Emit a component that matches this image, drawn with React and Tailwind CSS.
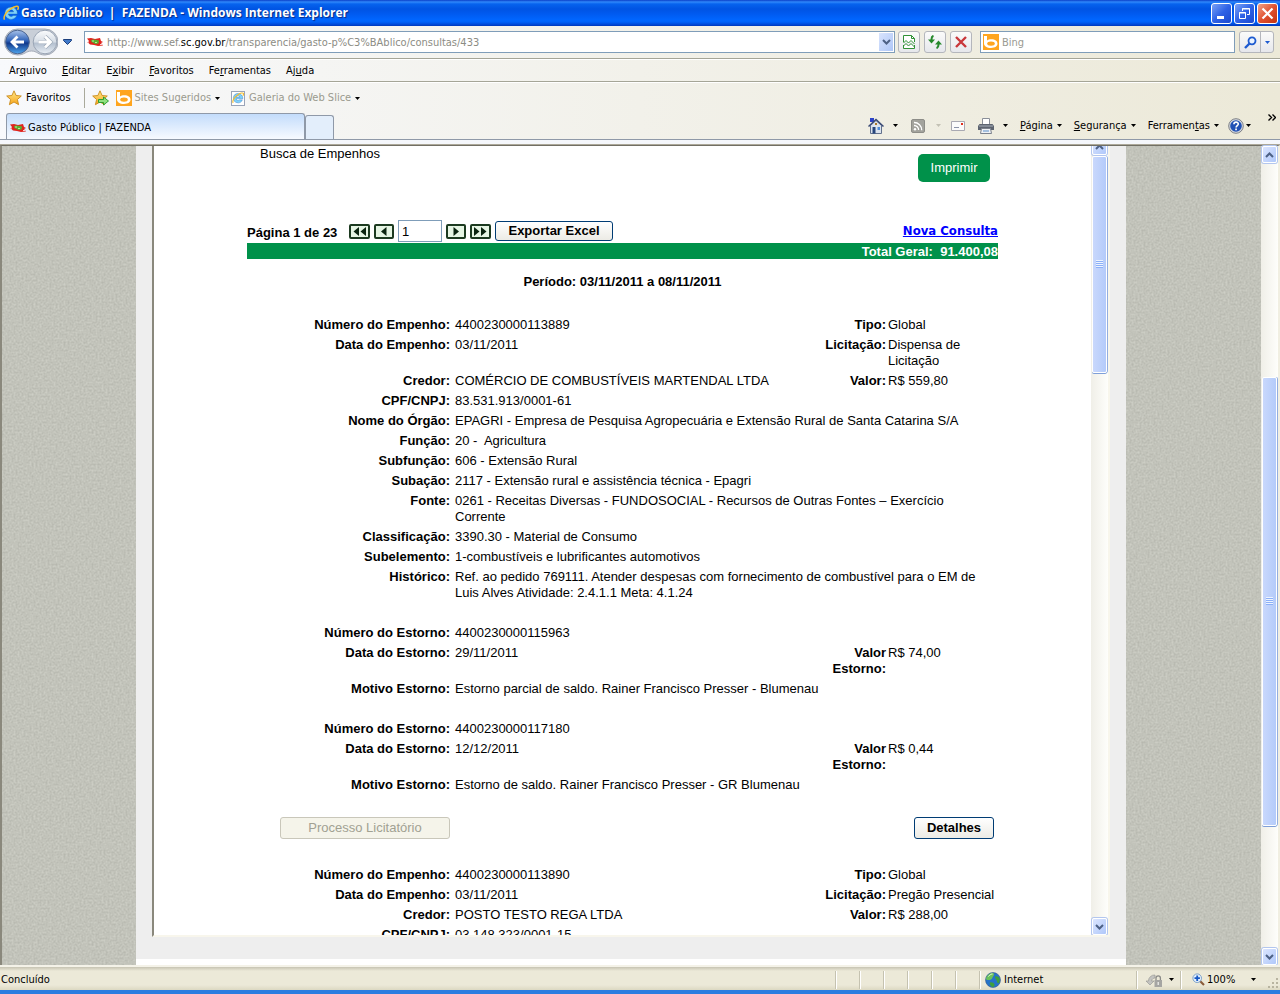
import React, { useState } from "react";

const estornoGap = { gap: true };

const empenhos = [
  {
    id: "4400230000113889",
    actions: true,
    rows: [
      { label: "Número do Empenho:", value: "4400230000113889", label2: "Tipo:", value2: "Global" },
      { label: "Data do Empenho:", value: "03/11/2011", label2: "Licitação:", value2: "Dispensa de Licitação" },
      { label: "Credor:", value: "COMÉRCIO DE COMBUSTÍVEIS MARTENDAL LTDA", label2: "Valor:", value2: "R$ 559,80" },
      { label: "CPF/CNPJ:", value: "83.531.913/0001-61" },
      { label: "Nome do Órgão:", value: "EPAGRI - Empresa de Pesquisa Agropecuária e Extensão Rural de Santa Catarina S/A" },
      { label: "Função:", value: "20 -\u00a0 Agricultura" },
      { label: "Subfunção:", value: "606 - Extensão Rural" },
      { label: "Subação:", value: "2117 - Extensão rural e assistência técnica - Epagri" },
      { label: "Fonte:", value: "0261 - Receitas Diversas - FUNDOSOCIAL - Recursos de Outras Fontes – Exercício Corrente" },
      { label: "Classificação:", value: "3390.30 - Material de Consumo" },
      { label: "Subelemento:", value: "1-combustíveis e lubrificantes automotivos" },
      { label: "Histórico:", value: "Ref. ao pedido 769111. Atender despesas com fornecimento de combustível para o EM de Luis Alves Atividade: 2.4.1.1 Meta: 4.1.24" },
      estornoGap,
      { label: "Número do Estorno:", value: "4400230000115963" },
      { label: "Data do Estorno:", value: "29/11/2011", label2: "Valor Estorno:", value2: "R$ 74,00" },
      { label: "Motivo Estorno:", value: "Estorno parcial de saldo. Rainer Francisco Presser - Blumenau" },
      estornoGap,
      { label: "Número do Estorno:", value: "4400230000117180" },
      { label: "Data do Estorno:", value: "12/12/2011", label2: "Valor Estorno:", value2: "R$ 0,44" },
      { label: "Motivo Estorno:", value: "Estorno de saldo. Rainer Francisco Presser - GR Blumenau" },
    ],
  },
  {
    id: "4400230000113890",
    rows: [
      { label: "Número do Empenho:", value: "4400230000113890", label2: "Tipo:", value2: "Global" },
      { label: "Data do Empenho:", value: "03/11/2011", label2: "Licitação:", value2: "Pregão Presencial" },
      { label: "Credor:", value: "POSTO TESTO REGA LTDA", label2: "Valor:", value2: "R$ 288,00" },
      { label: "CPF/CNPJ:", value: "03.148.323/0001-15" },
    ],
  },
];

/* ---------- icons ---------- */

function Caret({ className = "text-black" }) {
  return (
    <svg width="5" height="3" viewBox="0 0 5 3" className={`shrink-0 ${className}`} aria-hidden="true">
      <path d="M0 0h5L2.500 3z" fill="currentColor" />
    </svg>
  );
}

function IeLogo({ size = 16 }) {
  return (
    <svg width={size} height={size} viewBox="0 0 16 16" className="shrink-0" aria-hidden="true">
      <path
        d="M8 2a6.200 6.200 0 1 0 5.800 8.500h-3.700a2.700 2.700 0 0 1-4.700-1.400h9A6.300 6.300 0 0 0 8 2zM5.400 6.800a2.700 2.700 0 0 1 5.200 0z"
        fill="#7fd2fa"
        stroke="#1b66b8"
        strokeWidth=".5"
      />
      <path d="M1.600 14.600C-.3 12 3.500 6.500 8 3.600c3.300-2.200 6.800-3.100 7.300-1.500.2.700-.1 1.700-.7 2.800" fill="none" stroke="#f4bd2c" strokeWidth="1.500" />
    </svg>
  );
}

function FlagIcon() {
  return (
    <svg width="16" height="10" viewBox="0 0 16 10" className="shrink-0" aria-hidden="true">
      <path d="M0 1.500 4 1l4 1 5-1 1 3 2 1-2 1 2 2.500-5 .5-4-1-4-.5-1.500-1.500L0 5.500 2 4z" fill="#e0241d" />
      <path d="M0 5h2M13 7.500h2" stroke="#fff" strokeWidth=".8" />
      <path d="m4 3 3-.5 5 1-.5 3-3 .5-4-2z" fill="#55b22f" />
      <path d="M5 4h2M8 5.500h2" stroke="#c2e39a" />
    </svg>
  );
}

function BingIcon() {
  return (
    <svg width="16" height="16" viewBox="0 0 16 16" className="shrink-0" aria-hidden="true">
      <path d="M0 0h16v16H0z" fill="#ffa51e" />
      <path d="M1 2h3v4.500c1-.7 2.500-1.200 4.300-1.200 3.900 0 6.200 1.800 6.200 4.300s-2.300 4.400-6.500 4.400-7-1.800-7-4.500z" fill="#fff" />
      <ellipse cx="8" cy="9.600" rx="3.800" ry="2.200" fill="#ffa51e" />
    </svg>
  );
}

function Star({ arrow }) {
  return (
    <svg width="17" height="16" viewBox="0 0 17 16" className="shrink-0" aria-hidden="true">
      <defs>
        <linearGradient id="starFill" x1="0" y1="0" x2="0" y2="1">
          <stop offset="0" stopColor="#ffe88a" />
          <stop offset="1" stopColor="#f7a51b" />
        </linearGradient>
      </defs>
      <path
        d="m8 .8 2.100 4.700 5.200.5-3.900 3.500 1.200 5.200L8 12l-4.600 2.700 1.200-5.200L.7 6l5.200-.5z"
        fill="url(#starFill)"
        stroke="#c98a1c"
        strokeWidth=".9"
        strokeLinejoin="round"
      />
      {arrow && <path d="M6.500 9.500h5V7l5 4-5 4v-2.500h-5z" fill="#8fe07f" stroke="#219a2a" strokeWidth=".9" />}
    </svg>
  );
}

function NavArrows() {
  return (
    <svg width="54" height="28" viewBox="0 0 54 28" aria-hidden="true">
      <defs>
        <linearGradient id="navBack" x1="0" y1="0" x2="0" y2="1">
          <stop offset="0" stopColor="#a9c3ea" />
          <stop offset=".45" stopColor="#2f62b8" />
          <stop offset=".55" stopColor="#11398c" />
          <stop offset="1" stopColor="#4fa6ee" />
        </linearGradient>
        <linearGradient id="navNext" x1="0" y1="0" x2="0" y2="1">
          <stop offset="0" stopColor="#fbfcfd" />
          <stop offset=".5" stopColor="#d5dce5" />
          <stop offset=".55" stopColor="#b3bfcf" />
          <stop offset="1" stopColor="#eaf0f6" />
        </linearGradient>
      </defs>
      <path d="M13.500 1h27.500a13 13 0 0 1 0 26c-7 0-8-4-13.500-4s-7 4-14 4a13 13 0 0 1 0-26z" fill="#c9cfd8" stroke="#a5acb8" />
      <circle cx="13.500" cy="14" r="11.800" fill="url(#navBack)" stroke="#4a638f" />
      <path d="M20 14H9M13.500 8.500 8 14l5.500 5.500" fill="none" stroke="#fff" strokeWidth="2.800" />
      <circle cx="41" cy="14" r="11.800" fill="url(#navNext)" stroke="#9aa5b5" />
      <path d="M34.500 14h11M41 8.500l5.500 5.500-5.500 5.500" fill="none" stroke="#9ba7b6" strokeWidth="4" />
      <path d="M34.500 14h11M41 8.500l5.500 5.500-5.500 5.500" fill="none" stroke="#fff" strokeWidth="2.800" />
    </svg>
  );
}

function HomeIcon() {
  return (
    <svg width="16" height="16" viewBox="0 0 16 16" aria-hidden="true">
      <path d="M2 0h4v4H2z" fill="#2c43c8" />
      <path d="M2.500 7.500 8 2.500l5.500 5v8h-11z" fill="#dbe3ee" stroke="#62718d" />
      <path d="M.5 8.500 8 1.500l7.500 7" fill="none" stroke="#3a4a75" strokeWidth="1.500" />
      <path d="M4.500 9h3v6.500h-3z" fill="#27467c" />
      <path d="M9.500 9H12v3H9.500z" fill="#4f8bd8" />
      <path d="M7 5h2v2H7z" fill="#a9772a" />
    </svg>
  );
}

function RssIcon() {
  return (
    <svg width="14" height="14" viewBox="0 0 14 14" aria-hidden="true">
      <rect x=".5" y=".5" width="13" height="13" rx="1.500" fill="#a3a39d" stroke="#8d8d88" />
      <circle cx="4" cy="10.300" r="1.200" fill="#fff" />
      <path d="M3 6.500a4.500 4.500 0 0 1 4.600 4.600M3 3.500a7.500 7.500 0 0 1 7.700 7.700" fill="none" stroke="#fff" strokeWidth="1.300" />
    </svg>
  );
}

function MailIcon() {
  return (
    <svg width="14" height="10" viewBox="0 0 14 10" aria-hidden="true">
      <path d="M.5.5h13v9H.5z" fill="#fbfbfb" stroke="#a9a9b2" />
      <path d="M10 2h2v2h-2z" fill="#e0301e" />
      <path d="M3 6.500h5" stroke="#8b93a8" />
    </svg>
  );
}

function PrinterIcon() {
  return (
    <svg width="16" height="16" viewBox="0 0 16 16" aria-hidden="true">
      <path d="M4.500.5h7v6h-7z" fill="#fff" stroke="#8a8f98" />
      <path d="M1.500 6h13l1.500 2v4H0V8z" fill="#5d6470" />
      <path d="M1 8h14" stroke="#a9b0ba" />
      <path d="M3.500 10.500h9l1 5h-11z" fill="#eef1f5" stroke="#7b818c" />
      <path d="M5 13h6" stroke="#5b8fc9" />
    </svg>
  );
}

function HelpIcon() {
  return (
    <svg width="16" height="16" viewBox="0 0 16 16" aria-hidden="true">
      <circle cx="8" cy="8" r="7.300" fill="#d7dbe2" stroke="#70747c" strokeWidth=".9" />
      <circle cx="8" cy="8" r="5.800" fill="#2151b5" />
      <path d="M5.900 6.200c0-2.900 4.400-2.700 4.400-.2 0 1.500-2.200 1.600-2.200 3.400" fill="none" stroke="#fff" strokeWidth="1.600" />
      <path d="M7.200 10.600h1.700v1.700H7.200z" fill="#fff" />
    </svg>
  );
}

function GlobeIcon() {
  return (
    <svg width="16" height="16" viewBox="0 0 16 16" aria-hidden="true">
      <circle cx="8" cy="8" r="7.500" fill="#2673c9" stroke="#3a5b86" strokeWidth=".6" />
      <path d="M3 3c2-2.300 5-2.500 6-1.500S8 4 7.500 5.500 6 8 4.500 8 1 8 1 7s.8-2.800 2-4z" fill="#6cc25a" />
      <path d="M10 4.500c1.500-.8 3.500 0 4.500 1.500.5 2 .3 3.500-.5 5-1.300.6-2-.5-2.200-2S9.300 5.300 10 4.500zM5 10.500c1.500-.5 4 .3 4.500 1.800S8.600 15 7.500 15 4 12 5 10.500z" fill="#3fa03c" />
      <path d="M3.500 4.500c1-1.700 3-2.500 4-2.500" stroke="#e9fbe2" fill="none" />
    </svg>
  );
}

function Chevron({ up }) {
  return (
    <svg width="9" height="6" viewBox="0 0 9 6" aria-hidden="true">
      <path d={up ? "M1 5l3.500-3.500L8 5" : "M1 1l3.500 3.500L8 1"} fill="none" stroke="#4d6185" strokeWidth="2" />
    </svg>
  );
}

/* ---------- browser chrome ---------- */

function TitleBar() {
  const btn = "flex h-[21px] w-[21px] items-center justify-center rounded-[3px] border border-white";
  const blue = "bg-linear-to-br from-[#7ba0f5] via-[#2f62e6] to-[#1b49cf]";
  return (
    <header className="flex h-[26px] shrink-0 items-center justify-between bg-[linear-gradient(to_bottom,#0a3fc8_0px,#2f88fb_2px,#0663ee_4px,#0054e3_9px,#0059ee_13px,#0066ff_20px,#0062f8_22px,#0043d0_25px,#0038b8_26px)] pr-[2px] pl-[3px]">
      <div className="flex items-center gap-[2px]">
        <IeLogo />
        <h1 className="font-['Open_Sans',sans-serif] text-[12px] leading-4 font-bold whitespace-pre text-white [text-shadow:1px_1px_1px_#0b2b84]">
          Gasto Público  |  FAZENDA - Windows Internet Explorer
        </h1>
      </div>
      <div className="flex gap-[2px]">
        <button type="button" aria-label="Minimizar" className={`${btn} ${blue}`}>
          <svg width="13" height="13" viewBox="0 0 13 13">
            <path d="M2 9h7v3H2z" fill="#fff" />
          </svg>
        </button>
        <button type="button" aria-label="Restaurar" className={`${btn} ${blue}`}>
          <svg width="13" height="13" viewBox="0 0 13 13">
            <path d="M4.500 4V1.500h7v6H9M4 2h8" fill="none" stroke="#fff" />
            <path d="M1.500 5.500h6v6h-6zM1 6h7" fill="none" stroke="#fff" />
          </svg>
        </button>
        <button type="button" aria-label="Fechar" className={`${btn} bg-linear-to-br from-[#f0a085] via-[#e0512f] to-[#c3330f]`}>
          <svg width="13" height="13" viewBox="0 0 13 13">
            <path d="m1.500 1.500 10 10m0-10-10 10" stroke="#fff" strokeWidth="2.200" />
          </svg>
        </button>
      </div>
    </header>
  );
}

function AddressBar() {
  const tool =
    "flex h-[22px] w-[22px] items-center justify-center rounded-[3px] border border-[#b4b6bc] bg-linear-to-b from-[#fbfbfa] to-[#e6e7ec]";
  return (
    <div className="flex h-8 shrink-0 items-center pr-[6px] pl-1">
      <button type="button" aria-label="Voltar e avançar">
        <NavArrows />
      </button>
      <button type="button" aria-label="Páginas recentes" className="mx-[5px] w-[16px]">
        <svg width="9" height="6" viewBox="0 0 9 6">
          <path d="M.5.5h8v1l-4 4-4-4z" fill="#3f78c9" stroke="#1c3f7c" />
        </svg>
      </button>
      <div className="flex h-[22px] flex-1 items-center border border-[#7f9db9] bg-white pr-px pl-[2px]">
        <FlagIcon />
        <div className="ml-1 flex-1 pt-[2px] text-[#8c8c84]">
          http://www.sef.<span className="text-black">sc.gov.br</span>/transparencia/gasto-p%C3%BAblico/consultas/433
        </div>
        <button
          type="button"
          aria-label="Abrir lista de endereços"
          className="flex h-[18px] w-[14px] items-center justify-center bg-linear-to-br from-[#d9e4fd] to-[#aec6f7]"
        >
          <Chevron />
        </button>
      </div>
      <div className="ml-[3px] flex gap-1">
        <button type="button" aria-label="Modo de compatibilidade" className={tool}>
          <svg width="12" height="14" viewBox="0 0 12 14">
            <path d="M.5 7V.5h8l3 3V7M.5 10v3.500h11V10" fill="#fff" stroke="#2f9136" />
            <path d="m.5 8 2.500-2.500L5.500 8 8 5.500 11.500 9M.5 11 3 8.500 5.500 11 8 8.500l3.500 3.500M8.500.5v3h3" fill="none" stroke="#2f9136" />
          </svg>
        </button>
        <button type="button" aria-label="Atualizar" className={tool}>
          <svg width="14" height="14" viewBox="0 0 14 14">
            <path d="M5.500.8Q3.300 1.500 3.500 5M8.500 13.200q2.200-.7 2-4.200" fill="none" stroke="#26892c" strokeWidth="2" />
            <path d="M0 4.500h7L3.500 8.500zM7 9.500h7L10.500 5.500z" fill="#26892c" />
          </svg>
        </button>
        <button type="button" aria-label="Parar" className={tool}>
          <svg width="12" height="12" viewBox="0 0 12 12">
            <path d="m1 1 10 10M11 1 1 11" stroke="#c9373b" strokeWidth="2.400" />
          </svg>
        </button>
      </div>
      <label className="ml-2 flex h-[22px] w-[255px] items-center gap-[3px] border border-[#7f9db9] bg-white pl-[2px]">
        <BingIcon />
        <input type="text" placeholder="Bing" aria-label="Pesquisar" className="min-w-0 flex-1 pt-[2px] outline-none placeholder:text-[#9a9a92]" />
      </label>
      <div className="ml-1 flex h-[22px] rounded-[3px] border border-[#b4b6bc] bg-linear-to-b from-[#fbfbfa] to-[#e6e7ec]">
        <button type="button" aria-label="Pesquisar" className="flex w-[21px] items-center justify-center border-r border-[#b4b6bc]">
          <svg width="13" height="13" viewBox="0 0 13 13">
            <circle cx="8" cy="4.800" r="3.500" fill="#eaf3ff" stroke="#1e5bd0" strokeWidth="1.800" />
            <path d="m5.500 7.500-4.500 4.500" stroke="#1e5bd0" strokeWidth="2.400" />
          </svg>
        </button>
        <button type="button" aria-label="Opções de pesquisa" className="flex w-3 items-center justify-center">
          <Caret className="text-[#1e5bd0]" />
        </button>
      </div>
    </div>
  );
}

// text before the access key, the key itself, text after it
const menus = [
  ["Ar", "q", "uivo"],
  ["", "E", "ditar"],
  ["E", "x", "ibir"],
  ["", "F", "avoritos"],
  ["Fe", "r", "ramentas"],
  ["Aj", "u", "da"],
];

function KeyLabel({ parts }) {
  return (
    <span>
      {parts[0]}
      <u>{parts[1]}</u>
      {parts[2]}
    </span>
  );
}

function MenuBar() {
  return (
    <nav className="flex h-6 shrink-0 items-center gap-[15px] border-t border-b border-[#a5a597] pt-[2px] pl-[9px] shadow-[inset_0_1px_0_#fff]">
      {menus.map((m) => (
        <button type="button" key={m.join("")}>
          <KeyLabel parts={m} />
        </button>
      ))}
    </nav>
  );
}

function FavoritesBar() {
  return (
    <div className="flex h-[31px] shrink-0 items-center border-t border-white pl-[6px]">
      <button type="button" className="flex items-center gap-[3px]">
        <Star /> Favoritos
      </button>
      <div className="ml-[13px] h-5 border-l border-[#a9a99b]" />
      <button type="button" aria-label="Adicionar a favoritos" className="mx-[7px]">
        <Star arrow />
      </button>
      <button type="button" className="flex items-center gap-[3px] text-[#9a9a8e]">
        <BingIcon /> Sites Sugeridos <Caret className="ml-px text-black" />
      </button>
      <button type="button" className="ml-[11px] flex items-center gap-1 text-[#9a9a8e]">
        <span className="flex h-[15px] w-[14px] items-center justify-center border border-[#9aa4b8] bg-white">
          <IeLogo size={12} />
        </span>
        Galeria do Web Slice <Caret className="text-black" />
      </button>
    </div>
  );
}

function TabBar() {
  return (
    <div className="flex h-[27px] shrink-0 items-end border-b border-[#8f99a8] pl-[6px]">
      <div className="flex h-[26px] w-[299px] items-center gap-[2px] rounded-t-[3px] border border-b-0 border-[#8f99a8] bg-linear-to-b from-[#c3dcfb] to-[#f7faff] pt-[2px] pl-[3px]">
        <FlagIcon />
        Gasto Público | FAZENDA
      </div>
      <button
        type="button"
        aria-label="Nova guia"
        className="h-[24px] w-[29px] rounded-t-[3px] border border-b-0 border-[#8f99a8] bg-[#e3eefb]"
      />
      <div className="ml-auto flex h-[27px] items-center pr-1">
        <button type="button" aria-label="Página inicial" className="flex items-center gap-[9px]">
          <HomeIcon />
          <Caret />
        </button>
        <button type="button" aria-label="Feeds" className="ml-[13px] flex items-center gap-[11px]">
          <RssIcon />
          <Caret className="text-[#c3c1b4]" />
        </button>
        <button type="button" aria-label="Ler email" className="ml-[10px]">
          <MailIcon />
        </button>
        <button type="button" aria-label="Imprimir página" className="ml-[13px] flex items-center gap-[9px]">
          <PrinterIcon />
          <Caret />
        </button>
        <button type="button" className="ml-3 flex items-center gap-1">
          <KeyLabel parts={["", "P", "ágina"]} />
          <Caret />
        </button>
        <button type="button" className="ml-3 flex items-center gap-1">
          <KeyLabel parts={["", "S", "egurança"]} />
          <Caret />
        </button>
        <button type="button" className="ml-3 flex items-center gap-1">
          <KeyLabel parts={["Ferramen", "t", "as"]} />
          <Caret />
        </button>
        <button type="button" aria-label="Ajuda" className="ml-[9px] flex items-center gap-[2px]">
          <HelpIcon />
          <Caret />
        </button>
        <button type="button" aria-label="Mais comandos" className="mt-[2px] ml-[17px] self-start">
          <svg width="8" height="7" viewBox="0 0 8 7">
            <path d="m.5.500 3 3-3 3m4-6 3 3-3 3" fill="none" stroke="#000" strokeWidth="1.400" />
          </svg>
        </button>
      </div>
    </div>
  );
}

function ScrollButton({ up }) {
  return (
    <button
      type="button"
      aria-label={up ? "Rolar para cima" : "Rolar para baixo"}
      className="flex h-[17px] w-[15px] shrink-0 items-center justify-center rounded-[2px] border border-white bg-linear-to-br from-[#dbe5fe] to-[#b0c8fa] shadow-[0_0_0_1px_#b3c6ee]"
    >
      <Chevron up={up} />
    </button>
  );
}

function ScrollBar({ thumb, before }) {
  return (
    <div className="flex w-[17px] shrink-0 flex-col items-center bg-linear-to-r from-[#f0efe8] to-[#fefefb]">
      <ScrollButton up />
      <div className={`w-full shrink-0 ${before}`} />
      <div
        className={`flex w-[15px] shrink-0 items-center justify-center rounded-[2px] border border-white bg-linear-to-r from-[#c9d8fc] to-[#b4cbfa] shadow-[0_1px_0_#7f9fd8,1px_0_0_#93aee0] ${thumb}`}
      >
        <div className="flex flex-col gap-px">
          {[0, 1, 2, 3].map((i) => (
            <div key={i} className="h-px w-[7px] bg-[#8cb0f8] shadow-[0_-1px_0_#eef4fe]" />
          ))}
        </div>
      </div>
      <div className="flex-1" />
      <ScrollButton />
    </div>
  );
}

function Texture() {
  return (
    <svg className="absolute inset-0 h-full w-full" aria-hidden="true">
      <filter id="grain" colorInterpolationFilters="sRGB">
        <feTurbulence type="fractalNoise" baseFrequency="0.5" numOctaves="2" seed="4" />
        <feColorMatrix values="0.14 0 0 0 0.69  0.14 0 0 0 0.695  0.14 0 0 0 0.66  0 0 0 0 1" />
      </filter>
      <rect width="100%" height="100%" fill="#c2c3ba" />
      <rect width="100%" height="100%" filter="url(#grain)" />
    </svg>
  );
}

/* ---------- page content ---------- */

function PageButton({ label, path, wide }) {
  const w = wide ? 21 : 20;
  return (
    <button type="button" aria-label={label}>
      <svg width={w} height="15" viewBox={`0 0 ${w} 15`}>
        <rect x="1" y="1" width={w - 2} height="13" rx="1" fill="#e6f5e4" stroke="#1c3a20" strokeWidth="2" />
        <path d={path} fill="#0b2410" />
      </svg>
    </button>
  );
}

function EmpenhoRow({ row }) {
  if (row.gap) {
    return (
      <tr>
        <td colSpan={4} className="h-5" />
      </tr>
    );
  }
  const label = "py-[2px] text-right align-top font-bold";
  return (
    <tr>
      <th scope="row" className={`${label} pr-[5px]`}>{row.label}</th>
      {row.label2 ? (
        <>
          <td className="py-[2px] align-top">{row.value}</td>
          <th scope="row" className={`${label} pr-[2px]`}>{row.label2}</th>
          <td className="py-[2px] align-top">{row.value2}</td>
        </>
      ) : (
        <td colSpan={3} className="py-[2px] pr-4 align-top">{row.value}</td>
      )}
    </tr>
  );
}

function Empenho({ empenho }) {
  return (
    <section>
      <table className="w-full table-fixed border-collapse">
        <colgroup>
          <col className="w-[208px]" />
          <col />
          <col className="w-[80px]" />
          <col className="w-[110px]" />
        </colgroup>
        <tbody>
          {empenho.rows.map((row, i) => (
            <EmpenhoRow key={i} row={row} />
          ))}
        </tbody>
      </table>
      {empenho.actions && (
        <div className="flex justify-between pt-[22px] pr-1 pb-[26px] pl-[33px]">
          <button
            type="button"
            disabled
            className="h-[22px] w-[170px] rounded-[3px] border border-[#c9c7ba] bg-[#f5f4ea] text-[#a1a192]"
          >
            Processo Licitatório
          </button>
          <button
            type="button"
            className="h-[22px] w-[80px] rounded-[3px] border border-[#003c74] bg-linear-to-b from-white to-[#ecebe5] font-bold"
          >
            Detalhes
          </button>
        </div>
      )}
    </section>
  );
}

function Report() {
  const [page, setPage] = useState("1");

  return (
    <div className="mx-auto w-full max-w-[751px] font-['Liberation_Sans',Arial,sans-serif] text-[13px] leading-4 text-black">
      <div className="flex items-start justify-between pr-2 pl-[13px]">
        <h2>Busca de Empenhos</h2>
        <button type="button" className="mt-2 h-7 w-[72px] rounded-[5px] bg-[#00914a] text-white">
          Imprimir
        </button>
      </div>

      <div className="mt-[37px] flex h-6 items-center gap-1">
        <label htmlFor="pagina" className="mr-1 w-[94px] pt-1 font-bold">
          Página {page} de 23
        </label>
        <PageButton wide label="Primeira página" path="M10 3v9L4.500 7.500zM17 3v9l-5.500-4.500z" />
        <PageButton label="Página anterior" path="M12.500 3v9L7 7.500z" />
        <input
          id="pagina"
          type="text"
          value={page}
          onChange={(e) => setPage(e.target.value)}
          className="h-[22px] w-[44px] border border-[#7f9db9] bg-white px-[3px]"
        />
        <PageButton label="Próxima página" path="M7.500 3v9L13 7.500z" />
        <PageButton wide label="Última página" path="M4 3v9l5.500-4.500zM11 3v9l5.500-4.500z" />
        <button
          type="button"
          className="h-5 w-[118px] rounded-[3px] border border-[#003c74] bg-linear-to-b from-white to-[#ecebe5] font-bold"
        >
          Exportar Excel
        </button>
        <a href="#consulta" className="ml-auto font-['DejaVu_Sans_Condensed','DejaVu_Sans',sans-serif] text-[13px] font-bold text-[#0000ff] underline">
          Nova Consulta
        </a>
      </div>
      <div className="h-4 bg-[#00914a] text-right leading-[18px] font-bold whitespace-pre text-white">Total Geral:  91.400,08</div>
      <p className="mt-[15px] mb-[25px] text-center font-bold">Período: 03/11/2011 a 08/11/2011</p>

      {empenhos.map((e) => (
        <Empenho key={e.id} empenho={e} />
      ))}
    </div>
  );
}

function StatusBar() {
  const cell = "flex h-[18px] items-center border-l border-[#c5c2b0] shadow-[inset_1px_0_0_#fff]";
  return (
    <footer className="flex h-[23px] shrink-0 items-center bg-[linear-gradient(to_bottom,#c6c3b2_0px,#ece9d8_4px,#ece9d8_18px,#dcd8c2_23px)] pt-[2px]">
      <span className="flex-1 pl-[1px]">Concluído</span>
      {[0, 1, 2, 3, 4, 5].map((i) => (
        <div key={i} className={`${cell} w-6`} />
      ))}
      <div className={`${cell} w-[157px] gap-[3px] pl-[5px]`}>
        <GlobeIcon />
        Internet
      </div>
      <button type="button" aria-label="Modo protegido" className={`${cell} w-[44px] justify-between pr-[6px] pl-[9px]`}>
        <svg width="17" height="16" viewBox="0 0 17 16">
          <path d="M9 3a6 6 0 0 0-6.500 6H0l4 4 4-4H5.500c.3-2 2-3 3.500-3z" fill="#c3c3c0" stroke="#9b9b97" strokeWidth=".7" />
          <path d="M10 8V6a2.200 2.200 0 0 1 4.400 0v2" fill="none" stroke="#8b8b88" strokeWidth="1.300" />
          <path d="M8.500 8h7.500v7H8.500z" fill="#a5a5a2" />
          <path d="M12.200 10v3" stroke="#f3f3f0" strokeWidth="1.200" />
        </svg>
        <Caret />
      </button>
      <button type="button" aria-label="Alterar nível de zoom" className={`${cell} w-[76px] gap-[2px] pl-[11px]`}>
        <svg width="13" height="13" viewBox="0 0 13 13">
          <path d="m8 8 4 4" stroke="#8a5b3a" strokeWidth="2.200" />
          <circle cx="5.200" cy="5.200" r="4.300" fill="#e5f1fd" stroke="#7ba0c8" />
          <path d="M5.200 2.500v5.400M2.500 5.200h5.400" stroke="#1657c4" strokeWidth="1.800" />
        </svg>
        100%
        <Caret className="ml-auto text-black" />
      </button>
      <svg width="12" height="12" viewBox="0 0 12 12" className="ml-3 self-end" aria-hidden="true">
        <path d="M8 0h2v2H8zM8 4h2v2H8zM8 8h2v2H8zM4 4h2v2H4zM4 8h2v2H4zM0 8h2v2H0z" fill="#b8b4a0" />
      </svg>
    </footer>
  );
}

export default function App() {
  return (
    <div className="flex h-screen flex-col overflow-hidden bg-[#ece9d8] font-['DejaVu_Sans_Condensed','DejaVu_Sans',sans-serif] text-[11px] leading-[14px] text-black">
      <TitleBar />
      <div className="shrink-0 bg-linear-to-r from-[#f8f9fc] to-[#ece9d8]">
        <AddressBar />
        <MenuBar />
        <FavoritesBar />
        <TabBar />
      </div>
      <div className="h-[5px] shrink-0 border-b border-[#aca899] bg-[#f5f7fb]" />

      <div className="flex min-h-0 flex-1 border-t border-r-2 border-l-2 border-t-[#716f64] border-r-[#f1efe2] border-l-[#8a887c]">
        <div className="relative flex min-w-0 flex-1 overflow-hidden pr-px">
          <Texture />
          <main className="relative mx-auto flex w-[990px] flex-col bg-white">
            <div className="flex min-h-0 flex-1 flex-col bg-[#eeeeee] px-4 pb-[22px]">
              <div className="flex min-h-0 flex-1 overflow-hidden border-r-2 border-b-2 border-l-2 border-r-[#f8f6ec] border-b-[#f8f6ec] border-l-[#8a887c] bg-white">
                <div className="min-w-0 flex-1 overflow-hidden">
                  <Report />
                </div>
                <div className="-mt-2 flex">
                  <ScrollBar before="h-px" thumb="h-[217px]" />
                </div>
              </div>
            </div>
            <div className="h-[6px] shrink-0" />
          </main>
        </div>
        <ScrollBar before="h-[214px]" thumb="h-[449px]" />
      </div>
      <div className="h-[2px] shrink-0 bg-[#f4f2e8]" />
      <StatusBar />
      <div className="h-1 shrink-0 bg-[#2b7de0]" />
    </div>
  );
}
